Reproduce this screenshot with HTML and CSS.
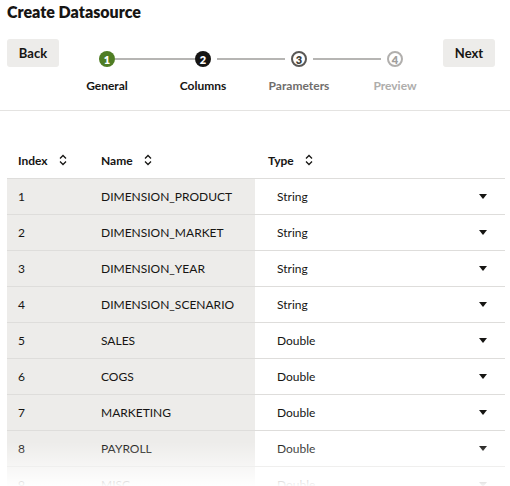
FILE: index.html
```html
<!DOCTYPE html>
<html lang="en">
<head>
<meta charset="utf-8">
<title>Create Datasource</title>
<link rel="stylesheet" href="styles.css">
</head>
<body>
<div class="page">
  <h1 class="title">Create Datasource</h1>
  <div class="toolbar">
    <button class="btn">Back</button>
    <ol class="steps">
      <li class="step done"><span class="dot">1</span><span class="label">General</span></li>
      <li class="step current"><span class="dot">2</span><span class="label">Columns</span></li>
      <li class="step next"><span class="dot">3</span><span class="label">Parameters</span></li>
      <li class="step disabled"><span class="dot">4</span><span class="label">Preview</span></li>
    </ol>
    <button class="btn">Next</button>
  </div>
  <div class="divider"></div>
  <div class="table">
    <div class="row head">
      <div class="cell c-index">Index <svg class="sort" width="8" height="12" viewBox="0 0 8 12"><path d="M1 4.5 4 1.5 7 4.5M1 7.5 4 10.5 7 7.5" fill="none" stroke="#161513" stroke-width="1.3"/></svg></div>
      <div class="cell c-name">Name <svg class="sort" width="8" height="12" viewBox="0 0 8 12"><path d="M1 4.5 4 1.5 7 4.5M1 7.5 4 10.5 7 7.5" fill="none" stroke="#161513" stroke-width="1.3"/></svg></div>
      <div class="cell c-type">Type <svg class="sort" width="8" height="12" viewBox="0 0 8 12"><path d="M1 4.5 4 1.5 7 4.5M1 7.5 4 10.5 7 7.5" fill="none" stroke="#161513" stroke-width="1.3"/></svg></div>
    </div>
    <div class="row"><div class="cell c-index">1</div><div class="cell c-name">DIMENSION_PRODUCT</div><div class="cell c-type"><span class="select">String</span><span class="caret"></span></div></div>
    <div class="row"><div class="cell c-index">2</div><div class="cell c-name">DIMENSION_MARKET</div><div class="cell c-type"><span class="select">String</span><span class="caret"></span></div></div>
    <div class="row"><div class="cell c-index">3</div><div class="cell c-name">DIMENSION_YEAR</div><div class="cell c-type"><span class="select">String</span><span class="caret"></span></div></div>
    <div class="row"><div class="cell c-index">4</div><div class="cell c-name">DIMENSION_SCENARIO</div><div class="cell c-type"><span class="select">String</span><span class="caret"></span></div></div>
    <div class="row"><div class="cell c-index">5</div><div class="cell c-name">SALES</div><div class="cell c-type"><span class="select">Double</span><span class="caret"></span></div></div>
    <div class="row"><div class="cell c-index">6</div><div class="cell c-name">COGS</div><div class="cell c-type"><span class="select">Double</span><span class="caret"></span></div></div>
    <div class="row"><div class="cell c-index">7</div><div class="cell c-name">MARKETING</div><div class="cell c-type"><span class="select">Double</span><span class="caret"></span></div></div>
    <div class="row"><div class="cell c-index">8</div><div class="cell c-name">PAYROLL</div><div class="cell c-type"><span class="select">Double</span><span class="caret"></span></div></div>
    <div class="row"><div class="cell c-index">9</div><div class="cell c-name">MISC</div><div class="cell c-type"><span class="select">Double</span><span class="caret"></span></div></div>
  </div>
  <div class="fade"></div>
</div>
</body>
</html>
```
FILE: styles.css
```css
html, body {
  margin: 0;
  padding: 0;
  height: 100%;
  overflow: hidden;
  background: #fff;
}
body {
  font-family: Lato, "Noto Sans", sans-serif;
  color: #161513;
}
.page {
  position: relative;
  height: 486px;
  overflow: hidden;
}
.title {
  margin: 0;
  padding: 2px 0 0 7px;
  font-size: 16px;
  line-height: 20px;
  font-weight: 800;
}
.toolbar {
  display: flex;
  align-items: flex-start;
  padding: 17px 0 0 7px;
}
.btn {
  width: 52px;
  height: 28px;
  border: 0;
  border-radius: 3px;
  background: #edecea;
  font-family: inherit;
  font-size: 13px;
  font-weight: 700;
  color: #161513;
  padding: 0;
}
.steps {
  display: flex;
  margin: 0;
  padding: 12px 0 0;
  list-style: none;
}
.step {
  position: relative;
  width: 96px;
  display: flex;
  flex-direction: column;
  align-items: center;
  gap: 11px;
}
.step:not(:last-child)::after {
  content: "";
  position: absolute;
  top: 7px;
  left: calc(50% + 14px);
  width: 68px;
  height: 2px;
  background: #b6b5b3;
}
.step.done::after {
  left: calc(50% + 8px);
  width: 80px;
}
.dot {
  box-sizing: border-box;
  width: 16px;
  height: 16px;
  border-radius: 50%;
  display: flex;
  align-items: center;
  justify-content: center;
  font-size: 11px;
  font-weight: 800;
  line-height: 1;
}
.done .dot { background: #4f7d24; color: #fff; }
.current .dot { background: #161513; color: #fff; }
.next .dot { border: 2px solid #5a5856; color: #3d3b39; background: #fff; }
.disabled .dot { border: 2px solid #b1afad; color: #a09e9c; background: #fff; }
.label {
  font-size: 12px;
  font-weight: 700;
  line-height: 16px;
}
.next .label { color: #6f6d6b; }
.disabled .label { color: #aeadab; }

.divider {
  height: 1px;
  background: #e4e3e1;
  margin-top: 16px;
}

.table {
  margin: 31px 5px 0 7px;
}
.row {
  display: flex;
  height: 36px;
  box-sizing: border-box;
  border-top: 1px solid #dedddb;
}
.row.head {
  border-top: 0;
}
.cell {
  display: flex;
  align-items: center;
  font-size: 12px;
  box-sizing: border-box;
}
.c-index { width: 83px; padding-left: 11px; }
.c-name { width: 165px; padding-left: 11px; }
.c-type { flex: 1; padding-left: 22px; padding-right: 18px; }
.row:not(.head) .c-index,
.row:not(.head) .c-name { background: #edecea; }
.head .cell { font-weight: 700; gap: 11px; }
.head .c-type { padding-left: 13px; }
.sort { display: block; }
.select { flex: 1; }
.caret {
  width: 0;
  height: 0;
  border-left: 4.5px solid transparent;
  border-right: 4.5px solid transparent;
  border-top: 5px solid #161513;
}
.fade {
  position: absolute;
  left: 0;
  right: 0;
  bottom: 0;
  height: 44px;
  background: linear-gradient(rgba(255,255,255,0), rgba(255,255,255,0.97));
  pointer-events: none;
}
```
